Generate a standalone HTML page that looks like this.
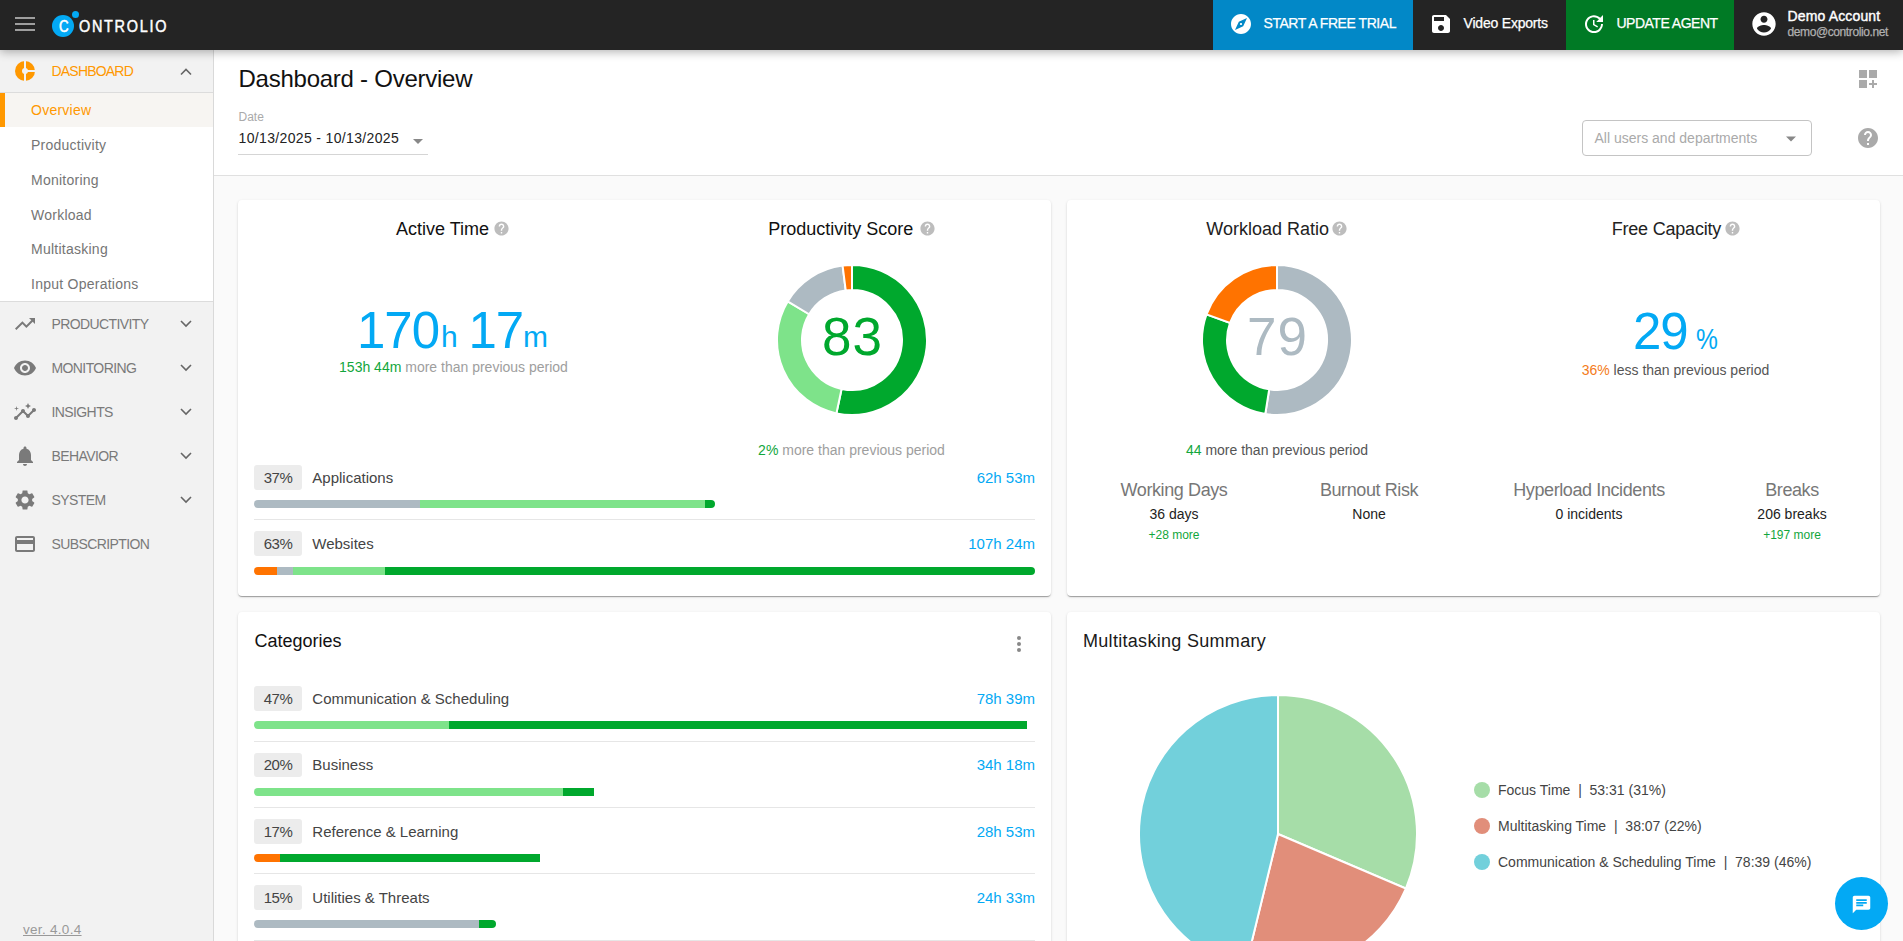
<!DOCTYPE html>
<html><head><meta charset="utf-8"><title>Controlio - Dashboard Overview</title>
<style>
html,body{margin:0;padding:0;}
body{width:1903px;height:941px;overflow:hidden;position:relative;background:#fafafa;font-family:"Liberation Sans", sans-serif;}
.t{position:absolute;white-space:nowrap;}
svg{display:block}
</style></head><body>
<div style="position:absolute;left:0px;top:0px;width:1903px;height:50px;background:#242424;box-shadow:0 2px 9px rgba(0,0,0,.3);z-index:5"></div>
<div style="position:absolute;left:15px;top:16.5px;width:20px;height:2px;background:#9e9e9e;z-index:6"></div>
<div style="position:absolute;left:15px;top:23px;width:20px;height:2px;background:#9e9e9e;z-index:6"></div>
<div style="position:absolute;left:15px;top:29px;width:20px;height:2px;background:#9e9e9e;z-index:6"></div>
<svg style="position:absolute;left:50px;top:10px;z-index:6" width="30" height="30" viewBox="0 0 30 30"><circle cx="13" cy="16" r="11" fill="#03a9f4"/><circle cx="25.5" cy="4.6" r="3.5" fill="#03a9f4"/></svg>
<div class="t" style="left:59.00px;top:17.61px;font-size:17px;line-height:17px;color:#fff;font-weight:400;z-index:7;transform:scaleX(0.78);transform-origin:0 0;-webkit-text-stroke:0.6px #fff">C</div>
<div class="t" style="left:78.50px;top:17.61px;font-size:17px;line-height:17px;color:#fff;font-weight:400;letter-spacing:2px;z-index:6;transform:scaleX(0.85);transform-origin:0 0;-webkit-text-stroke:0.5px #fff">ONTROLIO</div>
<div style="position:absolute;left:1213px;top:0px;width:200px;height:50px;background:#0288c7;z-index:6"></div>
<svg style="position:absolute;left:1229px;top:12px;z-index:6" width="24" height="24" viewBox="0 0 24 24"><path fill="#fff" d="M12 10.9c-.61 0-1.1.49-1.1 1.1s.49 1.1 1.1 1.1c.61 0 1.1-.49 1.1-1.1s-.49-1.1-1.1-1.1zM12 2C6.48 2 2 6.48 2 12s4.48 10 10 10 10-4.48 10-10S17.52 2 12 2zm2.19 12.19L6 18l3.81-8.19L18 6l-3.81 8.19z"/></svg>
<div class="t" style="left:1263.50px;top:15.75px;font-size:14px;line-height:14px;color:#fff;font-weight:400;z-index:6;letter-spacing:-0.45px;-webkit-text-stroke:0.25px #fff">START A FREE TRIAL</div>
<svg style="position:absolute;left:1429px;top:12px;z-index:6" width="24" height="24" viewBox="0 0 24 24"><path fill="#fff" d="M17 3H5c-1.11 0-2 .9-2 2v14c0 1.1.89 2 2 2h14c1.1 0 2-.9 2-2V7l-4-4zm-5 16c-1.66 0-3-1.34-3-3s1.34-3 3-3 3 1.34 3 3-1.34 3-3 3zm3-10H5V5h10v4z"/></svg>
<div class="t" style="left:1463.50px;top:15.75px;font-size:14px;line-height:14px;color:#fff;font-weight:400;z-index:6;letter-spacing:-0.2px;-webkit-text-stroke:0.25px #fff">Video Exports</div>
<div style="position:absolute;left:1566px;top:0px;width:168px;height:50px;background:#007a25;z-index:6"></div>
<svg style="position:absolute;left:1582px;top:12px;z-index:6" width="24" height="24" viewBox="0 0 24 24"><path fill="#fff" d="M21 10.12h-6.78l2.74-2.82c-2.73-2.7-7.15-2.8-9.88-.1-2.73 2.71-2.73 7.08 0 9.79s7.15 2.71 9.88 0C18.32 15.65 19 14.08 19 12.1h2c0 1.98-.88 4.55-2.64 6.29-3.51 3.48-9.21 3.48-12.72 0-3.5-3.47-3.53-9.11-.02-12.58s9.14-3.47 12.65 0L21 3v7.12zM12.5 8v4.25l3.5 2.08-.72 1.21L11 13V8h1.5z"/></svg>
<div class="t" style="left:1616.50px;top:15.75px;font-size:14px;line-height:14px;color:#fff;font-weight:400;z-index:6;letter-spacing:-0.5px;-webkit-text-stroke:0.25px #fff">UPDATE AGENT</div>
<svg style="position:absolute;left:1750px;top:10px;z-index:6" width="28" height="28" viewBox="0 0 24 24"><path fill="#fff" d="M12 2C6.48 2 2 6.48 2 12s4.48 10 10 10 10-4.48 10-10S17.52 2 12 2zm0 3c1.66 0 3 1.34 3 3s-1.34 3-3 3-3-1.34-3-3 1.34-3 3-3zm0 14.2c-2.5 0-4.71-1.28-6-3.22.03-1.99 4-3.08 6-3.08 1.99 0 5.97 1.09 6 3.08-1.29 1.94-3.5 3.22-6 3.22z"/></svg>
<div class="t" style="left:1787.50px;top:9.15px;font-size:14px;line-height:14px;color:#fff;font-weight:400;z-index:6;letter-spacing:0.15px;-webkit-text-stroke:0.4px #fff">Demo Account</div>
<div class="t" style="left:1787.50px;top:25.54px;font-size:12px;line-height:12px;color:#b0b0b0;font-weight:400;z-index:6;letter-spacing:-0.4px;-webkit-text-stroke:0.25px #b0b0b0">demo@controlio.net</div>
<div style="position:absolute;left:0px;top:50px;width:213px;height:891px;background:#f2f2f2;border-right:1px solid #d9d9d9;"></div>
<div style="position:absolute;left:0px;top:93px;width:213px;height:209px;background:#fff;border-top:1px solid #dcdcdc;border-bottom:1px solid #dcdcdc;box-sizing:border-box;"></div>
<div style="position:absolute;left:0px;top:93px;width:213px;height:34px;background:#f7f5f2"></div>
<div style="position:absolute;left:0px;top:92px;width:213px;height:1px;background:#dcdcdc"></div>
<div style="position:absolute;left:0px;top:93px;width:5px;height:34px;background:#ff9800"></div>
<svg style="position:absolute;left:13px;top:59px;" width="24" height="24" viewBox="0 0 24 24"><circle cx="12" cy="12" r="10" fill="#ff9800"/><rect x="11" y="0" width="2" height="24" fill="#f2f2f2"/><rect x="12" y="11" width="12" height="2" fill="#f2f2f2"/><circle cx="12" cy="12" r="3" fill="#f2f2f2"/></svg>
<div class="t" style="left:51.50px;top:64.15px;font-size:14px;line-height:14px;color:#ff9800;font-weight:400;letter-spacing:-0.8px">DASHBOARD</div>
<svg style="position:absolute;left:179px;top:64.6px;" width="14" height="12" viewBox="0 0 14 12"><polyline points="2,9.5 7,4.5 12,9.5" fill="none" stroke="#666" stroke-width="1.6"/></svg>
<div class="t" style="left:31.00px;top:103.15px;font-size:14px;line-height:14px;color:#ff9800;font-weight:400;letter-spacing:0.25px">Overview</div>
<div class="t" style="left:31.00px;top:137.95px;font-size:14px;line-height:14px;color:#757575;font-weight:400;letter-spacing:0.25px">Productivity</div>
<div class="t" style="left:31.00px;top:172.75px;font-size:14px;line-height:14px;color:#757575;font-weight:400;letter-spacing:0.25px">Monitoring</div>
<div class="t" style="left:31.00px;top:207.55px;font-size:14px;line-height:14px;color:#757575;font-weight:400;letter-spacing:0.25px">Workload</div>
<div class="t" style="left:31.00px;top:242.35px;font-size:14px;line-height:14px;color:#757575;font-weight:400;letter-spacing:0.25px">Multitasking</div>
<div class="t" style="left:31.00px;top:277.15px;font-size:14px;line-height:14px;color:#757575;font-weight:400;letter-spacing:0.25px">Input Operations</div>
<svg style="position:absolute;left:13px;top:312px;" width="24" height="24" viewBox="0 0 24 24"><path fill="#7a7a7a" d="M16 6l2.29 2.29-4.88 4.88-4-4L2 16.59 3.41 18l6-6 4 4 6.3-6.29L22 12V6z"/></svg>
<div class="t" style="left:51.50px;top:317.15px;font-size:14px;line-height:14px;color:#7a7a7a;font-weight:400;letter-spacing:-0.6px">PRODUCTIVITY</div>
<svg style="position:absolute;left:179px;top:318px;" width="14" height="12" viewBox="0 0 14 12"><polyline points="2,3 7,8 12,3" fill="none" stroke="#666" stroke-width="1.6"/></svg>
<svg style="position:absolute;left:13px;top:356px;" width="24" height="24" viewBox="0 0 24 24"><path fill="#7a7a7a" d="M12 4.5C7 4.5 2.73 7.61 1 12c1.73 4.39 6 7.5 11 7.5s9.27-3.11 11-7.5c-1.73-4.39-6-7.5-11-7.5zM12 17c-2.76 0-5-2.24-5-5s2.24-5 5-5 5 2.24 5 5-2.24 5-5 5zm0-8c-1.66 0-3 1.34-3 3s1.34 3 3 3 3-1.34 3-3-1.34-3-3-3z"/></svg>
<div class="t" style="left:51.50px;top:361.15px;font-size:14px;line-height:14px;color:#7a7a7a;font-weight:400;letter-spacing:-0.6px">MONITORING</div>
<svg style="position:absolute;left:179px;top:362px;" width="14" height="12" viewBox="0 0 14 12"><polyline points="2,3 7,8 12,3" fill="none" stroke="#666" stroke-width="1.6"/></svg>
<svg style="position:absolute;left:13px;top:400px;" width="24" height="24" viewBox="0 0 24 24"><path fill="#7a7a7a" d="M21 8c-1.45 0-2.26 1.44-1.93 2.51l-3.55 3.56c-.3-.09-.74-.09-1.04 0l-2.55-2.55C12.27 10.45 11.46 9 10 9c-1.45 0-2.27 1.44-1.93 2.52l-4.56 4.55C2.44 15.74 1 16.55 1 18c0 1.1.9 2 2 2 1.45 0 2.26-1.44 1.93-2.51l4.55-4.56c.3.09.74.09 1.04 0l2.55 2.55C12.73 16.55 13.54 18 15 18c1.45 0 2.27-1.44 1.93-2.52l3.56-3.55c1.07.33 2.51-.48 2.51-1.93 0-1.1-.9-2-2-2zM15 9l.94-2.07L18 6l-2.06-.93L15 3l-.92 2.07L12 6l2.08.93zM3.5 11L4 9l2-.5L4 8l-.5-2L3 8l-2 .5L3 9z"/></svg>
<div class="t" style="left:51.50px;top:405.15px;font-size:14px;line-height:14px;color:#7a7a7a;font-weight:400;letter-spacing:-0.6px">INSIGHTS</div>
<svg style="position:absolute;left:179px;top:406px;" width="14" height="12" viewBox="0 0 14 12"><polyline points="2,3 7,8 12,3" fill="none" stroke="#666" stroke-width="1.6"/></svg>
<svg style="position:absolute;left:13px;top:444px;" width="24" height="24" viewBox="0 0 24 24"><path fill="#7a7a7a" d="M12 22c1.1 0 2-.9 2-2h-4c0 1.1.89 2 2 2zm6-6v-5c0-3.07-1.64-5.64-4.5-6.32V4c0-.83-.67-1.5-1.5-1.5s-1.5.67-1.5 1.5v.68C7.63 5.36 6 7.92 6 11v5l-2 2v1h16v-1l-2-2z"/></svg>
<div class="t" style="left:51.50px;top:449.15px;font-size:14px;line-height:14px;color:#7a7a7a;font-weight:400;letter-spacing:-0.6px">BEHAVIOR</div>
<svg style="position:absolute;left:179px;top:450px;" width="14" height="12" viewBox="0 0 14 12"><polyline points="2,3 7,8 12,3" fill="none" stroke="#666" stroke-width="1.6"/></svg>
<svg style="position:absolute;left:13px;top:488px;" width="24" height="24" viewBox="0 0 24 24"><path fill="#7a7a7a" d="M19.14 12.94c.04-.3.06-.61.06-.94 0-.32-.02-.64-.07-.94l2.03-1.58c.18-.14.23-.41.12-.61l-1.92-3.32c-.12-.22-.37-.29-.59-.22l-2.39.96c-.5-.38-1.03-.7-1.62-.94l-.36-2.54c-.04-.24-.24-.41-.48-.41h-3.84c-.24 0-.43.17-.47.41l-.36 2.54c-.59.24-1.13.57-1.62.94l-2.39-.96c-.22-.08-.47 0-.59.22L2.74 8.87c-.12.21-.08.47.12.61l2.03 1.58c-.05.3-.09.63-.09.94s.02.64.07.94l-2.03 1.58c-.18.14-.23.41-.12.61l1.92 3.32c.12.22.37.29.59.22l2.39-.96c.5.38 1.03.7 1.62.94l.36 2.54c.05.24.24.41.48.41h3.84c.24 0 .44-.17.47-.41l.36-2.54c.59-.24 1.13-.56 1.62-.94l2.39.96c.22.08.47 0 .59-.22l1.92-3.32c.12-.22.07-.47-.12-.61l-2.01-1.58zM12 15.6c-1.98 0-3.6-1.62-3.6-3.6s1.62-3.6 3.6-3.6 3.6 1.62 3.6 3.6-1.62 3.6-3.6 3.6z"/></svg>
<div class="t" style="left:51.50px;top:493.15px;font-size:14px;line-height:14px;color:#7a7a7a;font-weight:400;letter-spacing:-0.6px">SYSTEM</div>
<svg style="position:absolute;left:179px;top:494px;" width="14" height="12" viewBox="0 0 14 12"><polyline points="2,3 7,8 12,3" fill="none" stroke="#666" stroke-width="1.6"/></svg>
<svg style="position:absolute;left:13px;top:532px;" width="24" height="24" viewBox="0 0 24 24"><path fill="#7a7a7a" d="M20 4H4c-1.11 0-1.99.89-1.99 2L2 18c0 1.11.89 2 2 2h16c1.11 0 2-.89 2-2V6c0-1.11-.89-2-2-2zm0 14H4v-6h16v6zm0-10H4V6h16v2z"/></svg>
<div class="t" style="left:51.50px;top:537.15px;font-size:14px;line-height:14px;color:#7a7a7a;font-weight:400;letter-spacing:-0.6px">SUBSCRIPTION</div>
<div class="t" style="left:23.00px;top:922.87px;font-size:13.5px;line-height:13.5px;color:#999;font-weight:400;text-decoration:underline;letter-spacing:0.3px">ver. 4.0.4</div>
<div style="position:absolute;left:214px;top:50px;width:1689px;height:125px;background:#fff;border-bottom:1px solid #e0e0e0;"></div>
<div class="t" style="left:238.50px;top:67.18px;font-size:24px;line-height:24px;color:#111;font-weight:400;letter-spacing:-0.25px">Dashboard - Overview</div>
<div class="t" style="left:238.50px;top:110.84px;font-size:12px;line-height:12px;color:#aaa;font-weight:400;">Date</div>
<div class="t" style="left:238.50px;top:131.45px;font-size:14px;line-height:14px;color:#222;font-weight:400;letter-spacing:0.35px">10/13/2025 - 10/13/2025</div>
<svg style="position:absolute;left:412px;top:138px;" width="12" height="8" viewBox="0 0 12 8"><path d="M1 1h10l-5 5z" fill="#888"/></svg>
<div style="position:absolute;left:238px;top:154px;width:190px;height:1px;background:#d5d5d5"></div>
<svg style="position:absolute;left:1856px;top:67px;" width="24" height="24" viewBox="0 0 24 24"><path fill="#aaaaaa" d="M3 3h8v8H3zm10 0h8v8h-8zM3 13h8v8H3zm15 0h-2v3h-3v2h3v3h2v-3h3v-2h-3z"/></svg>
<div style="position:absolute;left:1582px;top:120px;width:230px;height:36px;border:1px solid #c4c4c4;border-radius:4px;box-sizing:border-box;background:#fff"></div>
<div class="t" style="left:1594.50px;top:130.95px;font-size:14px;line-height:14px;color:#aaa;font-weight:400;">All users and departments</div>
<svg style="position:absolute;left:1785px;top:134.5px;" width="12" height="8" viewBox="0 0 12 8"><path d="M1 1.5h10l-5 5z" fill="#888"/></svg>
<svg style="position:absolute;left:1856px;top:126px;" width="24" height="24" viewBox="0 0 24 24"><path fill="#aaaaaa" d="M12 2C6.48 2 2 6.48 2 12s4.48 10 10 10 10-4.48 10-10S17.52 2 12 2zm1 17h-2v-2h2v2zm2.07-7.75l-.9.92C13.45 12.9 13 13.5 13 15h-2v-.5c0-1.1.45-2.1 1.17-2.83l1.24-1.26c.37-.36.59-.86.59-1.41 0-1.1-.9-2-2-2s-2 .9-2 2H8c0-2.21 1.79-4 4-4s4 1.79 4 4c0 .88-.36 1.68-.93 2.25z"/></svg>
<div style="position:absolute;left:238px;top:200px;width:813px;height:396px;background:#fff;border-radius:4px;box-shadow:0 2px 1px -1px rgba(0,0,0,.2),0 1px 1px 0 rgba(0,0,0,.14),0 1px 3px 0 rgba(0,0,0,.12);"></div>
<div style="position:absolute;left:1067px;top:200px;width:813px;height:396px;background:#fff;border-radius:4px;box-shadow:0 2px 1px -1px rgba(0,0,0,.2),0 1px 1px 0 rgba(0,0,0,.14),0 1px 3px 0 rgba(0,0,0,.12);"></div>
<div style="position:absolute;left:238px;top:612px;width:813px;height:400px;background:#fff;border-radius:4px;box-shadow:0 2px 1px -1px rgba(0,0,0,.2),0 1px 1px 0 rgba(0,0,0,.14),0 1px 3px 0 rgba(0,0,0,.12);"></div>
<div style="position:absolute;left:1067px;top:612px;width:813px;height:400px;background:#fff;border-radius:4px;box-shadow:0 2px 1px -1px rgba(0,0,0,.2),0 1px 1px 0 rgba(0,0,0,.14),0 1px 3px 0 rgba(0,0,0,.12);"></div>
<div class="t" style="left:396.00px;top:219.66px;font-size:18px;line-height:18px;color:#111;font-weight:400;">Active Time</div>
<svg style="position:absolute;left:493.3px;top:219.7px;" width="17" height="17" viewBox="0 0 24 24"><path fill="#bdbdbd" d="M12 2C6.48 2 2 6.48 2 12s4.48 10 10 10 10-4.48 10-10S17.52 2 12 2zm1 17h-2v-2h2v2zm2.07-7.75l-.9.92C13.45 12.9 13 13.5 13 15h-2v-.5c0-1.1.45-2.1 1.17-2.83l1.24-1.26c.37-.36.59-.86.59-1.41 0-1.1-.9-2-2-2s-2 .9-2 2H8c0-2.21 1.79-4 4-4s4 1.79 4 4c0 .88-.36 1.68-.93 2.25z"/></svg>
<div class="t" style="left:357.00px;top:304.53px;font-size:51px;line-height:51px;color:#03a9f4;font-weight:400;letter-spacing:-1px">170</div>
<div class="t" style="left:441.00px;top:322.31px;font-size:30px;line-height:30px;color:#03a9f4;font-weight:400;">h</div>
<div class="t" style="left:468.50px;top:304.53px;font-size:51px;line-height:51px;color:#03a9f4;font-weight:400;letter-spacing:-1px">17</div>
<div class="t" style="left:523.00px;top:322.31px;font-size:30px;line-height:30px;color:#03a9f4;font-weight:400;">m</div>
<div class="t" style="left:-146.50px;width:1200px;text-align:center;top:359.75px;font-size:14px;line-height:14px;color:#9e9e9e;font-weight:400;"><span style="color:#12a63c">153h 44m</span> more than previous period</div>
<div class="t" style="left:768.20px;top:219.66px;font-size:18px;line-height:18px;color:#111;font-weight:400;">Productivity Score</div>
<svg style="position:absolute;left:918.5px;top:219.7px;" width="17" height="17" viewBox="0 0 24 24"><path fill="#bdbdbd" d="M12 2C6.48 2 2 6.48 2 12s4.48 10 10 10 10-4.48 10-10S17.52 2 12 2zm1 17h-2v-2h2v2zm2.07-7.75l-.9.92C13.45 12.9 13 13.5 13 15h-2v-.5c0-1.1.45-2.1 1.17-2.83l1.24-1.26c.37-.36.59-.86.59-1.41 0-1.1-.9-2-2-2s-2 .9-2 2H8c0-2.21 1.79-4 4-4s4 1.79 4 4c0 .88-.36 1.68-.93 2.25z"/></svg>
<svg style="position:absolute;left:776px;top:264px;" width="152" height="152" viewBox="0 0 152 152"><path d="M76.00 1.00A75 75 0 1 1 60.41 149.36L65.60 124.91A50 50 0 1 0 76.00 26.00Z" fill="#00a82d" stroke="#fff" stroke-width="2"/><path d="M60.41 149.36A75 75 0 0 1 11.71 37.37L33.14 50.25A50 50 0 0 0 65.60 124.91Z" fill="#7ee38a" stroke="#fff" stroke-width="2"/><path d="M11.71 37.37A75 75 0 0 1 66.60 1.59L69.73 26.39A50 50 0 0 0 33.14 50.25Z" fill="#adbac2" stroke="#fff" stroke-width="2"/><path d="M66.60 1.59A75 75 0 0 1 76.00 1.00L76.00 26.00A50 50 0 0 0 69.73 26.39Z" fill="#ff7300" stroke="#fff" stroke-width="2"/></svg>
<div class="t" style="left:252.50px;width:1200px;text-align:center;top:309.94px;font-size:53px;line-height:53px;color:#00a82d;font-weight:400;letter-spacing:1px">83</div>
<div class="t" style="left:251.50px;width:1200px;text-align:center;top:442.95px;font-size:14px;line-height:14px;color:#9e9e9e;font-weight:400;"><span style="color:#12a63c">2%</span> more than previous period</div>
<div style="position:absolute;left:254px;top:465px;width:48px;height:24.5px;background:#ececec;border-radius:3px"></div>
<div class="t" style="left:-322.00px;width:1200px;text-align:center;top:470.20px;font-size:15px;line-height:15px;color:#444;font-weight:400;letter-spacing:-0.5px">37%</div>
<div class="t" style="left:312.30px;top:470.20px;font-size:15px;line-height:15px;color:#444;font-weight:400;">Applications</div>
<div class="t" style="left:-165.00px;width:1200px;text-align:right;top:470.20px;font-size:15px;line-height:15px;color:#03a9f4;font-weight:400;">62h 53m</div>
<div style="position:absolute;left:254px;top:500px;width:461px;height:8px;border-radius:4px;overflow:hidden"><div style="position:absolute;left:0px;top:0;width:166px;height:8px;background:#adbac2"></div><div style="position:absolute;left:166px;top:0;width:285px;height:8px;background:#7ee38a"></div><div style="position:absolute;left:451px;top:0;width:10px;height:8px;background:#00a82d"></div></div>
<div style="position:absolute;left:254px;top:519.3px;width:781px;height:1px;background:#e6e6e6"></div>
<div style="position:absolute;left:254px;top:531px;width:48px;height:24.5px;background:#ececec;border-radius:3px"></div>
<div class="t" style="left:-322.00px;width:1200px;text-align:center;top:535.90px;font-size:15px;line-height:15px;color:#444;font-weight:400;letter-spacing:-0.5px">63%</div>
<div class="t" style="left:312.30px;top:535.90px;font-size:15px;line-height:15px;color:#444;font-weight:400;">Websites</div>
<div class="t" style="left:-165.00px;width:1200px;text-align:right;top:535.90px;font-size:15px;line-height:15px;color:#03a9f4;font-weight:400;">107h 24m</div>
<div style="position:absolute;left:254px;top:567px;width:781px;height:8px;border-radius:4px;overflow:hidden"><div style="position:absolute;left:0px;top:0;width:23px;height:8px;background:#ff7300"></div><div style="position:absolute;left:23px;top:0;width:16px;height:8px;background:#adbac2"></div><div style="position:absolute;left:39px;top:0;width:92px;height:8px;background:#7ee38a"></div><div style="position:absolute;left:131px;top:0;width:650px;height:8px;background:#00a82d"></div></div>
<div class="t" style="left:1206.30px;top:219.66px;font-size:18px;line-height:18px;color:#222;font-weight:400;">Workload Ratio</div>
<svg style="position:absolute;left:1331.1px;top:219.7px;" width="17" height="17" viewBox="0 0 24 24"><path fill="#bdbdbd" d="M12 2C6.48 2 2 6.48 2 12s4.48 10 10 10 10-4.48 10-10S17.52 2 12 2zm1 17h-2v-2h2v2zm2.07-7.75l-.9.92C13.45 12.9 13 13.5 13 15h-2v-.5c0-1.1.45-2.1 1.17-2.83l1.24-1.26c.37-.36.59-.86.59-1.41 0-1.1-.9-2-2-2s-2 .9-2 2H8c0-2.21 1.79-4 4-4s4 1.79 4 4c0 .88-.36 1.68-.93 2.25z"/></svg>
<svg style="position:absolute;left:1201px;top:264px;" width="152" height="152" viewBox="0 0 152 152"><path d="M76.00 1.00A75 75 0 1 1 64.27 150.08L68.18 125.38A50 50 0 1 0 76.00 26.00Z" fill="#adbac2" stroke="#fff" stroke-width="2"/><path d="M64.27 150.08A75 75 0 0 1 5.52 50.35L29.02 58.90A50 50 0 0 0 68.18 125.38Z" fill="#00a82d" stroke="#fff" stroke-width="2"/><path d="M5.52 50.35A75 75 0 0 1 76.00 1.00L76.00 26.00A50 50 0 0 0 29.02 58.90Z" fill="#ff7300" stroke="#fff" stroke-width="2"/></svg>
<div class="t" style="left:677.50px;width:1200px;text-align:center;top:309.94px;font-size:53px;line-height:53px;color:#adbac2;font-weight:400;letter-spacing:1px">79</div>
<div class="t" style="left:677.00px;width:1200px;text-align:center;top:442.85px;font-size:14px;line-height:14px;color:#555;font-weight:400;"><span style="color:#12a63c">44</span> more than previous period</div>
<div class="t" style="left:1611.70px;top:219.66px;font-size:18px;line-height:18px;color:#222;font-weight:400;letter-spacing:-0.2px">Free Capacity</div>
<svg style="position:absolute;left:1723.5px;top:219.7px;" width="17" height="17" viewBox="0 0 24 24"><path fill="#bdbdbd" d="M12 2C6.48 2 2 6.48 2 12s4.48 10 10 10 10-4.48 10-10S17.52 2 12 2zm1 17h-2v-2h2v2zm2.07-7.75l-.9.92C13.45 12.9 13 13.5 13 15h-2v-.5c0-1.1.45-2.1 1.17-2.83l1.24-1.26c.37-.36.59-.86.59-1.41 0-1.1-.9-2-2-2s-2 .9-2 2H8c0-2.21 1.79-4 4-4s4 1.79 4 4c0 .88-.36 1.68-.93 2.25z"/></svg>
<div class="t" style="left:1633.00px;top:306.13px;font-size:51px;line-height:51px;color:#03a9f4;font-weight:400;letter-spacing:-1px">29</div>
<div class="t" style="left:1695.50px;top:323.91px;font-size:30px;line-height:30px;color:#03a9f4;font-weight:400;transform:scaleX(0.82);transform-origin:0 0">%</div>
<div class="t" style="left:1075.50px;width:1200px;text-align:center;top:362.65px;font-size:14px;line-height:14px;color:#555;font-weight:400;"><span style="color:#f47b20">36%</span> less than previous period</div>
<div class="t" style="left:574.00px;width:1200px;text-align:center;top:481.06px;font-size:18px;line-height:18px;color:#777;font-weight:400;letter-spacing:-0.4px">Working Days</div>
<div class="t" style="left:574.00px;width:1200px;text-align:center;top:507.15px;font-size:14px;line-height:14px;color:#222;font-weight:400;">36 days</div>
<div class="t" style="left:574.00px;width:1200px;text-align:center;top:528.74px;font-size:12px;line-height:12px;color:#12a63c;font-weight:400;">+28 more</div>
<div class="t" style="left:769.00px;width:1200px;text-align:center;top:481.06px;font-size:18px;line-height:18px;color:#777;font-weight:400;letter-spacing:-0.4px">Burnout Risk</div>
<div class="t" style="left:769.00px;width:1200px;text-align:center;top:507.15px;font-size:14px;line-height:14px;color:#222;font-weight:400;">None</div>
<div class="t" style="left:989.00px;width:1200px;text-align:center;top:481.06px;font-size:18px;line-height:18px;color:#777;font-weight:400;letter-spacing:-0.4px">Hyperload Incidents</div>
<div class="t" style="left:989.00px;width:1200px;text-align:center;top:507.15px;font-size:14px;line-height:14px;color:#222;font-weight:400;">0 incidents</div>
<div class="t" style="left:1192.00px;width:1200px;text-align:center;top:481.06px;font-size:18px;line-height:18px;color:#777;font-weight:400;letter-spacing:-0.4px">Breaks</div>
<div class="t" style="left:1192.00px;width:1200px;text-align:center;top:507.15px;font-size:14px;line-height:14px;color:#222;font-weight:400;">206 breaks</div>
<div class="t" style="left:1192.00px;width:1200px;text-align:center;top:528.74px;font-size:12px;line-height:12px;color:#12a63c;font-weight:400;">+197 more</div>
<div class="t" style="left:254.50px;top:631.66px;font-size:18px;line-height:18px;color:#111;font-weight:400;">Categories</div>
<div style="position:absolute;left:1017px;top:636px;width:4px;height:4px;background:#888;border-radius:50%"></div>
<div style="position:absolute;left:1017px;top:642px;width:4px;height:4px;background:#888;border-radius:50%"></div>
<div style="position:absolute;left:1017px;top:648px;width:4px;height:4px;background:#888;border-radius:50%"></div>
<div style="position:absolute;left:254px;top:686.3px;width:48px;height:24.5px;background:#ececec;border-radius:3px"></div>
<div class="t" style="left:-322.00px;width:1200px;text-align:center;top:691.00px;font-size:15px;line-height:15px;color:#444;font-weight:400;letter-spacing:-0.5px">47%</div>
<div class="t" style="left:312.30px;top:691.00px;font-size:15px;line-height:15px;color:#444;font-weight:400;">Communication &amp; Scheduling</div>
<div class="t" style="left:-165.00px;width:1200px;text-align:right;top:691.00px;font-size:15px;line-height:15px;color:#03a9f4;font-weight:400;">78h 39m</div>
<div style="position:absolute;left:254px;top:721.3px;width:773px;height:8px;border-radius:4px 0 0 4px;overflow:hidden"><div style="position:absolute;left:0px;top:0;width:195px;height:8px;background:#7ee38a"></div><div style="position:absolute;left:195px;top:0;width:578px;height:8px;background:#00a82d"></div></div>
<div style="position:absolute;left:254px;top:740.5999999999999px;width:781px;height:1px;background:#e6e6e6"></div>
<div style="position:absolute;left:254px;top:752.6px;width:48px;height:24.5px;background:#ececec;border-radius:3px"></div>
<div class="t" style="left:-322.00px;width:1200px;text-align:center;top:757.30px;font-size:15px;line-height:15px;color:#444;font-weight:400;letter-spacing:-0.5px">20%</div>
<div class="t" style="left:312.30px;top:757.30px;font-size:15px;line-height:15px;color:#444;font-weight:400;">Business</div>
<div class="t" style="left:-165.00px;width:1200px;text-align:right;top:757.30px;font-size:15px;line-height:15px;color:#03a9f4;font-weight:400;">34h 18m</div>
<div style="position:absolute;left:254px;top:787.6px;width:340px;height:8px;border-radius:4px 0 0 4px;overflow:hidden"><div style="position:absolute;left:0px;top:0;width:309px;height:8px;background:#7ee38a"></div><div style="position:absolute;left:309px;top:0;width:31px;height:8px;background:#00a82d"></div></div>
<div style="position:absolute;left:254px;top:806.9px;width:781px;height:1px;background:#e6e6e6"></div>
<div style="position:absolute;left:254px;top:819px;width:48px;height:24.5px;background:#ececec;border-radius:3px"></div>
<div class="t" style="left:-322.00px;width:1200px;text-align:center;top:823.70px;font-size:15px;line-height:15px;color:#444;font-weight:400;letter-spacing:-0.5px">17%</div>
<div class="t" style="left:312.30px;top:823.70px;font-size:15px;line-height:15px;color:#444;font-weight:400;">Reference &amp; Learning</div>
<div class="t" style="left:-165.00px;width:1200px;text-align:right;top:823.70px;font-size:15px;line-height:15px;color:#03a9f4;font-weight:400;">28h 53m</div>
<div style="position:absolute;left:254px;top:854px;width:286px;height:8px;border-radius:4px 0 0 4px;overflow:hidden"><div style="position:absolute;left:0px;top:0;width:26px;height:8px;background:#ff7300"></div><div style="position:absolute;left:26px;top:0;width:260px;height:8px;background:#00a82d"></div></div>
<div style="position:absolute;left:254px;top:873.3px;width:781px;height:1px;background:#e6e6e6"></div>
<div style="position:absolute;left:254px;top:885.3px;width:48px;height:24.5px;background:#ececec;border-radius:3px"></div>
<div class="t" style="left:-322.00px;width:1200px;text-align:center;top:890.00px;font-size:15px;line-height:15px;color:#444;font-weight:400;letter-spacing:-0.5px">15%</div>
<div class="t" style="left:312.30px;top:890.00px;font-size:15px;line-height:15px;color:#444;font-weight:400;">Utilities &amp; Threats</div>
<div class="t" style="left:-165.00px;width:1200px;text-align:right;top:890.00px;font-size:15px;line-height:15px;color:#03a9f4;font-weight:400;">24h 33m</div>
<div style="position:absolute;left:254px;top:920.3px;width:242px;height:8px;border-radius:4px;overflow:hidden"><div style="position:absolute;left:0px;top:0;width:225px;height:8px;background:#adbac2"></div><div style="position:absolute;left:225px;top:0;width:17px;height:8px;background:#00a82d"></div></div>
<div style="position:absolute;left:254px;top:939.5999999999999px;width:781px;height:1px;background:#e6e6e6"></div>
<div class="t" style="left:1083.00px;top:631.66px;font-size:18px;line-height:18px;color:#1a1a1a;font-weight:400;letter-spacing:0.3px">Multitasking Summary</div>
<svg style="position:absolute;left:1138px;top:694px;" width="280" height="280" viewBox="0 0 280 280"><path d="M140 140L140.00 1.00A139 139 0 0 1 267.86 194.53Z" fill="#a6dda8" stroke="#fff" stroke-width="2"/><path d="M140 140L267.86 194.53A139 139 0 0 1 107.08 275.05Z" fill="#e18e7a" stroke="#fff" stroke-width="2"/><path d="M140 140L107.08 275.05A139 139 0 0 1 140.00 1.00Z" fill="#72d0db" stroke="#fff" stroke-width="2"/></svg>
<div style="position:absolute;left:1474px;top:782px;width:16px;height:16px;background:#a6dda8;border-radius:50%"></div>
<div class="t" style="left:1498.00px;top:783.15px;font-size:14px;line-height:14px;color:#444;font-weight:400;">Focus Time &nbsp;|&nbsp; 53:31 (31%)</div>
<div style="position:absolute;left:1474px;top:818px;width:16px;height:16px;background:#e18e7a;border-radius:50%"></div>
<div class="t" style="left:1498.00px;top:819.15px;font-size:14px;line-height:14px;color:#444;font-weight:400;">Multitasking Time &nbsp;|&nbsp; 38:07 (22%)</div>
<div style="position:absolute;left:1474px;top:854px;width:16px;height:16px;background:#72d0db;border-radius:50%"></div>
<div class="t" style="left:1498.00px;top:855.15px;font-size:14px;line-height:14px;color:#444;font-weight:400;">Communication &amp; Scheduling Time &nbsp;|&nbsp; 78:39 (46%)</div>
<div style="position:absolute;left:1835px;top:877px;width:53px;height:53px;background:#03a9f4;border-radius:50%"></div>
<svg style="position:absolute;left:1851px;top:894px;" width="21" height="21" viewBox="0 0 24 24"><path fill="#fff" d="M20 2H4c-1.1 0-1.99.9-1.99 2L2 22l4-4h14c1.1 0 2-.9 2-2V4c0-1.1-.9-2-2-2zM6 9h12v2H6V9zm8 5H6v-2h8v2zm4-6H6V6h12v2z"/></svg>
</body></html>
